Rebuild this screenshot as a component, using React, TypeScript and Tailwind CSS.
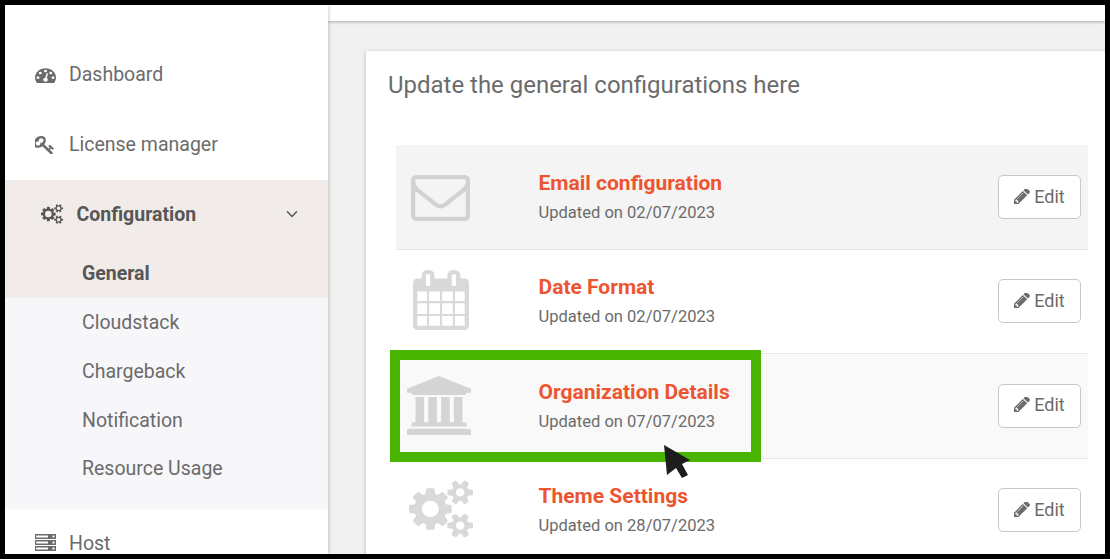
import React from "react";

const font = "font-['Roboto','Liberation_Sans',sans-serif]";

type IconProps = { className: string; viewBox?: string; d: string };

function Glyph({ className, viewBox = "0 0 1792 1792", d }: IconProps) {
  return (
    <svg className={className} viewBox={viewBox} preserveAspectRatio="none" fill="currentColor" aria-hidden="true">
      <path d={d} />
    </svg>
  );
}

const dot = "q0-53-37.5-90.5t-90.5-37.5-90.5 37.5-37.5 90.5 37.5 90.5 90.5 37.5 90.5-37.5 37.5-90.5z";
const gauge =
  "M384 1152" + dot + "m192-448" + dot +
  "m428 481l101-382q6-26-7.5-48.5t-38.5-29.5-48 6.5-30 39.5l-101 382q-60 5-107 43.5t-63 98.5q-20 77 20 146t117 89 146-20 89-117q16-60-6-117t-72-91z" +
  "m660-33" + dot + "m-640-640" + dot + "m448 192" + dot +
  "m320 448q0 261-141 483-19 29-54 29h-1402q-35 0-54-29-141-221-141-483 0-182 71-348t191-286 286-191 348-71 348 71 286 191 191 286 71 348z";
const key =
  "M832 512q0-80-56-136t-136-56-136 56-56 136q0 42 19 83-41-19-83-19-80 0-136 56t-56 136 56 136 136 56 136-56 56-136q0-42-19-83 41 19 83 19 80 0 136-56t56-136zm851 704q0 17-49 66t-66 49q-9 0-28.5-16t-36.5-33-38.5-40-24.5-26l-96 96 220 220q28 28 28 68 0 42-39 81t-81 39q-40 0-68-28l-671-671q-176 131-365 131-163 0-265.5-102.5t-102.5-265.5q0-160 95-313t248-248 313-95q163 0 265.5 102.5t102.5 265.5q0 189-131 365l355 355 96-96q-3-3-26-24.5t-40-38.5-33-36.5-16-28.5q0-17 49-66t66-49q13 0 23 10 6 6 46 44.5t82 79.5 86.5 86 73 78 28.5 41z";
const smallCog =
  "v140q0 16-149 31-12 27-30 52 51 113 51 138 0 4-4 7-122 71-124 71-8 0-46-47t-52-68q-20 2-30 2t-30-2q-14 21-52 68t-46 47q-2 0-124-71-4-3-4-7 0-25 51-138-18-25-30-52-149-15-149-31v-140q0-16 149-31 13-29 30-52-51-113-51-138 0-4 4-7 4-2 35-20t59-34 30-16q8 0 46 46.5t52 67.5q20-2 30-2t30 2q51-71 92-112l6-2q4 0 124 70 4 3 4 7 0 25-51 138 17 23 30 52 149 15 149 31z";
const cogs =
  "M896 896q0-106-75-181t-181-75-181 75-75 181 75 181 181 75 181-75 75-181zm768 512q0-52-38-90t-90-38-90 38-38 90q0 53 37.5 90.5t90.5 37.5 90.5-37.5 37.5-90.5zm0-1024q0-52-38-90t-90-38-90 38-38 90q0 53 37.5 90.5t90.5 37.5 90.5-37.5 37.5-90.5zm-384 421v185q0 10-7 19.5t-16 10.5l-155 24q-11 35-32 76 34 48 90 115 7 11 7 20 0 12-7 19-23 30-82.5 89.5t-78.5 59.5q-11 0-21-7l-115-90q-37 19-77 31-11 108-23 155-7 24-30 24h-186q-11 0-20-7.5t-10-17.5l-23-153q-34-10-75-31l-118 89q-7 7-20 7-11 0-21-8-144-133-144-160 0-9 7-19 10-14 41-53t47-61q-23-44-35-82l-152-24q-10-1-17-9.5t-7-19.5v-185q0-10 7-19.5t16-10.5l155-24q11-35 32-76-34-48-90-115-7-11-7-20 0-12 7-20 22-30 82-89t79-59q11 0 21 7l115 90q34-18 77-32 11-108 23-154 7-24 30-24h186q11 0 20 7.5t10 17.5l23 153q34 10 75 31l118-89q8-7 20-7 11 0 21 8 144 133 144 160 0 8-7 19-12 16-42 54t-45 60q23 48 34 82l152 23q10 2 17 10.5t7 19.5z" +
  "M1920 1338" + smallCog + "M1920 314" + smallCog;
const envelope =
  "M1664 1504v-768q-32 36-69 66-268 206-426 338-51 43-83 67t-86.5 48.5-102.5 24.5h-2q-48 0-102.5-24.5t-86.5-48.5-83-67q-158-132-426-338-37-30-69-66v768q0 13 9.5 22.5t22.5 9.5h1472q13 0 22.5-9.5t9.5-22.5zm0-1051v-24.5l-.5-13-3-12.5-5.5-9-9-7.5-14-2.5h-1472q-13 0-22.5 9.5t-9.5 22.5q0 168 147 284 193 152 401 317 6 5 35 29.5t46 37.5 44.5 31.5 50.5 27.5 43 9h2q20 0 43-9t50.5-27.5 44.5-31.5 46-37.5 35-29.5q208-165 401-317 54-43 100.5-115.5t46.5-131.5zm128-37v1088q0 66-47 113t-113 47h-1472q-66 0-113-47t-47-113v-1088q0-66 47-113t113-47h1472q66 0 113 47t47 113z";
const calendar =
  "M192 1664h288v-288h-288v288zm352 0h320v-288h-320v288zm-352-352h288v-320h-288v320zm352 0h320v-320h-320v320zm-352-384h288v-288h-288v288zm736 736h320v-288h-320v288zm-384-736h320v-288h-320v288zm768 736h288v-288h-288v288zm-384-352h320v-320h-320v320zm-352-864v-288q0-13-9.5-22.5t-22.5-9.5h-64q-13 0-22.5 9.5t-9.5 22.5v288q0 13 9.5 22.5t22.5 9.5h64q13 0 22.5-9.5t9.5-22.5zm736 864h288v-320h-288v320zm-384-384h320v-288h-320v288zm384 0h288v-288h-288v288zm32-480v-288q0-13-9.5-22.5t-22.5-9.5h-64q-13 0-22.5 9.5t-9.5 22.5v288q0 13 9.5 22.5t22.5 9.5h64q13 0 22.5-9.5t9.5-22.5zm384-64v1280q0 52-38 90t-90 38h-1408q-52 0-90-38t-38-90v-1280q0-52 38-90t90-38h128v-96q0-66 47-113t113-47h64q66 0 113 47t47 113v96h384v-96q0-66 47-113t113-47h64q66 0 113 47t47 113v96h128q52 0 90 38t38 90z";
const bank =
  "M960 0l960 384v128h-128q0 26-20.5 45t-48.5 19h-1526q-28 0-48.5-19t-20.5-45h-128v-128zm-704 640h256v768h128v-768h256v768h128v-768h256v768h128v-768h256v768h59q28 0 48.5 19t20.5 45v64h-1664v-64q0-26 20.5-45t48.5-19h59v-768zm1595 960q28 0 48.5 19t20.5 45v128h-1920v-128q0-26 20.5-45t48.5-19h1782z";
const pencil =
  "M491 1536l91-91-235-235-91 91v107h128v128h107zm523-928q0-22-22-22-10 0-17 7l-542 542q-7 7-7 17 0 22 22 22 10 0 17-7l542-542q7-7 7-17zm-54-192l416 416-832 832h-416v-416zm683 96q0 53-37 90l-166 166-416-416 166-165q36-38 90-38 53 0 91 38l235 234q37 39 37 91z";

function ServerIcon() {
  return (
    <svg className="mb-[2px] h-[17px] w-[21px] shrink-0" viewBox="0 0 21 17" fill="currentColor" aria-hidden="true">
      {[0, 6, 12].map((y) => (
        <path key={y} fillRule="evenodd" d={`M0 ${y}h21v5H0zM1.2 ${y + 1.5}v2H13v-2zM17.5 ${y + 1.5}v2h2v-2z`} />
      ))}
    </svg>
  );
}

function ThinCogsIcon() {
  return (
    <svg className="mb-[1px] h-[20px] w-[22px] shrink-0" viewBox="0 0 1920 1792" preserveAspectRatio="none" aria-hidden="true">
      <path fill="currentColor" d={cogs} />
      <g fill="#f1ece9">
        <circle cx="640" cy="896" r="285" />
        <circle cx="1536" cy="384" r="150" />
        <circle cx="1536" cy="1408" r="150" />
      </g>
    </svg>
  );
}

const subItems = ["Cloudstack", "Chargeback", "Notification", "Resource Usage"];

function Sidebar() {
  return (
    <nav className="relative z-10 flex w-[323px] shrink-0 flex-col bg-white text-[19.5px] shadow-[0_0_4px_rgba(0,0,0,0.3)]">
      <div className="mt-[35px] flex h-[70px] shrink-0 items-center pl-[30px]">
        <Glyph className="mb-[1px] h-[16px] w-[21px] shrink-0" viewBox="0 128 1792 1536" d={gauge} />
        <span className="ml-[13px] tracking-[-0.02px]">Dashboard</span>
      </div>
      <div className="flex h-[70px] shrink-0 items-center pl-[30px]">
        <Glyph className="mb-[1px] h-[18px] w-[19px] shrink-0" viewBox="128 128 1563 1563" d={key} />
        <span className="ml-[15px]">License manager</span>
      </div>
      <div className="h-[118px] shrink-0 bg-[#f1ece9] font-bold text-[#575757]">
        <div className="flex h-[69px] items-center pl-[36px]">
          <ThinCogsIcon />
          <span className="ml-[13.5px] text-[19.5px]">Configuration</span>
          <svg className="mr-[30px] mb-[1px] ml-auto h-[8px] w-[12px]" viewBox="0 0 12 8" fill="none" stroke="currentColor" strokeWidth="1.4" aria-hidden="true">
            <path d="M1 1.2 6 6.4 11 1.2" />
          </svg>
        </div>
        <div className="flex h-[49px] items-center pl-[77px]">General</div>
      </div>
      <div className="h-[211px] shrink-0 bg-[#f7f7fa]">
        {subItems.map((item) => (
          <div key={item} className="flex h-[48.9px] items-center pl-[77px]">{item}</div>
        ))}
      </div>
      <div className="flex h-[69px] shrink-0 items-center pl-[30px]">
        <ServerIcon />
        <span className="ml-[13px]">Host</span>
      </div>
    </nav>
  );
}

const rows = [
  { title: "Email configuration", date: "02/07/2023", d: envelope, box: "0 256 1792 1408", size: "h-[46px] w-[59px] ml-[15px] mt-[2px]", bg: "bg-[#f4f4f4]", tone: "text-[#d2d2d2]" },
  { title: "Date Format", date: "02/07/2023", d: calendar, box: "64 0 1664 1792", size: "h-[60px] w-[56px] ml-[17px] mb-[2px]", bg: "bg-white", tone: "text-[#d9d9d9]" },
  { title: "Organization Details", date: "07/07/2023", d: bank, box: "0 0 1920 1792", size: "h-[59px] w-[64px] ml-[11px] mb-[1px]", bg: "bg-[#f9f9f9]", tone: "text-[#d4d4d4]" },
  { title: "Theme Settings", date: "28/07/2023", d: cogs, box: "0 0 1920 1792", size: "h-[58px] w-[64px] ml-[13px] mb-[2px]", bg: "bg-white", tone: "text-[#d9d9d9]" },
];

export default function App() {
  return (
    <div className={`relative flex h-[559px] w-[1110px] overflow-hidden border-[5px] border-black bg-[#f1f1f1] text-[#6b6b6b] ${font}`}>
      <Sidebar />
      <main className="flex min-w-0 flex-1 flex-col">
        <div className="h-[16px] shrink-0 bg-white shadow-[0_1px_3px_rgba(0,0,0,0.3)]" />
        <section className="mt-[30px] ml-[38px] h-[560px] shrink-0 bg-white shadow-[0_1px_4px_rgba(0,0,0,0.25)]">
          <h1 className="pt-[18px] pl-[22px] text-[23.97px] leading-[32px] font-normal">
            Update the general configurations here
          </h1>
          <div className="mt-[44.4px] mr-[17px] ml-[30px]">
            {rows.map((row) => (
              <div key={row.title} className={`flex h-[104.4px] items-center border-b border-[#e7e7e7] ${row.bg}`}>
                <div className={`flex w-[142.5px] shrink-0 ${row.tone}`}>
                  <Glyph className={`${row.size} shrink-0`} viewBox={row.box} d={row.d} />
                </div>
                <div className="flex-1">
                  <h2 className="text-[21px] leading-[28px] font-bold text-[#ed5531]">{row.title}</h2>
                  <p className="mt-[3px] text-[16.55px] leading-[25px]">Updated on {row.date}</p>
                </div>
                <button className="mr-[7px] flex h-[44px] w-[83px] items-center justify-center rounded-[5px] border border-[#c8c8c8] bg-white pb-[2px] text-[18px]">
                  <Glyph className="mr-[4px] h-[15px] w-[16px]" viewBox="128 235 1515 1429" d={pencil} />
                  Edit
                </button>
              </div>
            ))}
          </div>
        </section>
      </main>
      <div className="absolute top-[345px] left-[385px] h-[112px] w-[371px] border-[10px] border-[#4ab500]" />
      <svg className="absolute top-[440px] left-[658px] h-[35px] w-[29px]" viewBox="0 0 29 35" fill="#1d1d1b" aria-hidden="true">
        <path d="M1 0 27 15 19 19 25 30 19 33 13 23 4 30Z" />
      </svg>
    </div>
  );
}
